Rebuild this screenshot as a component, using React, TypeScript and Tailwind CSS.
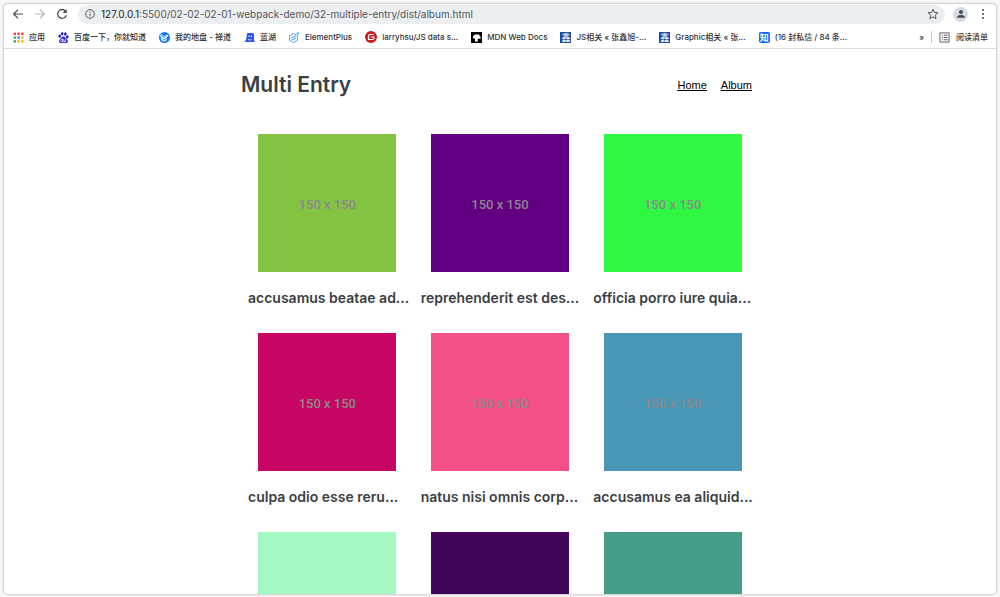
import type { ReactNode } from "react";
import { SiBaidu } from "react-icons/si";

const colors = ["#ea4335", "#ea4335", "#ea4335", "#34a853", "#4285f4", "#fbbc05", "#34a853", "#fbbc05", "#fbbc05"];

const AppsIcon = () => (
  <svg viewBox="0 0 11 11" className="size-[11px]" aria-hidden="true">
    {colors.map((c, i) => (
      <rect key={i} x={0.6 + (i % 3) * 3.8} y={0.6 + Math.floor(i / 3) * 3.8} width="2.4" height="2.4" fill={c} />
    ))}
  </svg>
);

const ZentaoIcon = () => (
  <svg viewBox="0 0 22 22" className="size-[11px]" aria-hidden="true">
    <circle cx="11" cy="11" r="11" fill="#1976e0" />
    <path d="M2 6c4-2 7 0 9 3 2-3 5-4 8-3 0 3-2 4-4 5 2 5 0 8-4 8-5 0-8-3-7-7C3 10 2 8 2 6Z" fill="#c5ebff" />
    <path d="M5 8c3 0 4 1 5 3M8 13c2 3 4 3 6 0" fill="none" stroke="#1976e0" strokeWidth="2" />
  </svg>
);

const LanhuIcon = () => (
  <svg viewBox="0 0 22 22" className="size-[11px]" aria-hidden="true">
    <path d="M8 2h9c2 0 3 1 3 3v12l2 3H1l3-4L6 4c0-1 1-2 2-2Z" fill="#2f54eb" />
    <path d="M9 7h2v3H9zM14 7h2v3h-2z" fill="#fff" />
    <path d="M8 14c2 3 5 3 7 0" fill="none" stroke="#fff" strokeWidth="1.5" />
  </svg>
);

const ElementIcon = () => (
  <svg viewBox="0 0 22 22" className="size-[11px]" aria-hidden="true">
    <path d="M9 3 17 7.5v9L9 21l-8-4.500v-9Z" fill="none" stroke="#5c9cf5" strokeWidth="2" />
    <path d="M5 10.500 14 7v2l-9 4zM5 15l9-3.500v2L5 17z" fill="#409eff" />
    <path d="M18 0v6M15 3h6" stroke="#409eff" strokeWidth="1.600" />
  </svg>
);

const GiteeIcon = () => (
  <svg viewBox="0 0 24 24" className="size-3" aria-hidden="true">
    <circle cx="12" cy="12" r="12" fill="#c71d23" />
    <path d="M18 7H10a3 3 0 0 0-3 3v7h8a3 3 0 0 0 3-3v-2h-7" fill="none" stroke="#fff" strokeWidth="2.400" />
  </svg>
);

const MdnIcon = () => (
  <svg viewBox="0 0 22 22" className="size-[11px]" aria-hidden="true">
    <path d="M0 0h22v22H0z" fill="#000" />
    <path d="M4 8 8 5h7l4 4v5l-4-1-2 2 1 4H8v-5l-4-2Z" fill="#fff" />
  </svg>
);

const XinIcon = () => (
  <span className="flex size-[11px] items-center justify-center bg-[#1c4ba0] text-[9px] leading-none text-white" aria-hidden="true">
    鑫
  </span>
);

const ZhihuIcon = () => (
  <span className="flex size-[11px] items-center justify-center rounded-[2px] bg-[#1268f2] text-[9px] font-bold leading-none text-white" aria-hidden="true">
    知
  </span>
);

const bookmarks: { label: string; icon: ReactNode }[] = [
  { label: "应用", icon: <AppsIcon /> },
  { label: "百度一下，你就知道", icon: <SiBaidu className="size-[11px] text-[#2319dc]" /> },
  { label: "我的地盘 - 禅道", icon: <ZentaoIcon /> },
  { label: "蓝湖", icon: <LanhuIcon /> },
  { label: "ElementPlus", icon: <ElementIcon /> },
  { label: "larryhsu/JS data s...", icon: <GiteeIcon /> },
  { label: "MDN Web Docs", icon: <MdnIcon /> },
  { label: "JS相关 « 张鑫旭-...", icon: <XinIcon /> },
  { label: "Graphic相关 « 张...", icon: <XinIcon /> },
  { label: "(16 封私信 / 84 条...", icon: <ZhihuIcon /> },
];

const photos = [
  { title: "accusamus beatae ad...", color: "bg-[#84c341]" },
  { title: "reprehenderit est des...", color: "bg-[#620081]" },
  { title: "officia porro iure quia...", color: "bg-[#2ff842]" },
  { title: "culpa odio esse reru...", color: "bg-[#c60662]" },
  { title: "natus nisi omnis corp...", color: "bg-[#f35085]" },
  { title: "accusamus ea aliquid...", color: "bg-[#4897b6]" },
  { title: "", color: "bg-[#a4f9c2]" },
  { title: "", color: "bg-[#420459]" },
  { title: "", color: "bg-[#449d86]" },
];

function Toolbar() {
  return (
    <div className="flex h-5 shrink-0 items-center px-2 text-[#50545a]">
      <button aria-label="Back" className="mr-2.5">
        <svg viewBox="0 0 12 12" className="size-3" fill="none" stroke="#45494d" strokeWidth="1.200">
          <path d="M11 6H2M6 1.700 1.700 6 6 10.300" />
        </svg>
      </button>
      <button aria-label="Forward" className="mr-2.5">
        <svg viewBox="0 0 12 12" className="size-3" fill="none" stroke="#b4b6b9" strokeWidth="1.200">
          <path d="M1 6h9M6 1.700 10.300 6 6 10.300" />
        </svg>
      </button>
      <button aria-label="Reload" className="mr-2.5">
        <svg viewBox="0 0 12 12" className="size-3" fill="none" stroke="#45494d" strokeWidth="1.300">
          <path d="M9.800 3.500A4.400 4.400 0 1 0 10.300 7.200" />
          <path d="M10.700 1v4h-4Z" fill="#45494d" stroke="none" />
        </svg>
      </button>
      <div className="flex h-[19px] grow items-center rounded-full bg-[#eceff1] pl-[7px] pr-1.5">
        <svg viewBox="0 0 12 12" className="mr-1.5 size-2.5" fill="none" stroke="#55595e" strokeWidth="1.200" aria-hidden="true">
          <circle cx="6" cy="6" r="5.200" />
          <path d="M6 5.300V9M6 2.900v1.300" />
        </svg>
        <div className="grow whitespace-nowrap font-[Inter,'Liberation_Sans',sans-serif] text-[10px] leading-4">
          <span className="text-[#202124]">127.0.0.1</span>:5500/02-02-02-01-webpack-demo/32-multiple-entry/dist/album.html
        </div>
        <button aria-label="Bookmark this page">
          <svg viewBox="0 0 24 24" className="size-3" fill="none" stroke="#50545a" strokeWidth="2">
            <path d="m12 2.500 2.900 6.400 6.900.7-5.200 4.700 1.500 6.900L12 17.700l-6.100 3.500 1.500-6.900-5.200-4.700 6.900-.7Z" />
          </svg>
        </button>
      </div>
      <button aria-label="Profile" className="ml-2 flex size-[15px] items-center justify-center rounded-full bg-[#d8dce3]">
        <svg viewBox="0 0 10 10" className="size-2.5" fill="#434b5b">
          <circle cx="5" cy="3" r="2.100" />
          <path d="M1 8.700C1 6.500 3.500 6 5 6s4 .5 4 2.700Z" />
        </svg>
      </button>
      <button aria-label="Menu" className="ml-2.5">
        <svg viewBox="0 0 10 12" className="h-3 w-2.5" fill="#50545a">
          <circle cx="5" cy="2" r="1.100" />
          <circle cx="5" cy="6" r="1.100" />
          <circle cx="5" cy="10" r="1.100" />
        </svg>
      </button>
    </div>
  );
}

function Bookmarks() {
  return (
    <div className="flex h-[25px] shrink-0 items-center whitespace-nowrap border-b border-[#dcdddf] pl-[9px] pr-2 pt-0.5 font-[Inter,'Noto_Sans_CJK_SC',sans-serif] text-[8px] font-medium leading-3 text-[#303236]">
      <nav aria-label="Bookmarks" className="flex items-center gap-[13px]">
        {bookmarks.map((b) => (
          <a key={b.label} href="#" className="flex items-center gap-[5px]">
            {b.icon}
            <span>{b.label}</span>
          </a>
        ))}
      </nav>
      <button aria-label="More bookmarks" className="ml-auto">»</button>
      <span className="ml-[7px] h-3 w-px bg-[#c9cbce]" />
      <button className="ml-[7px] flex items-center gap-1.5">
        <svg viewBox="0 0 12 12" className="size-[11px]" fill="none" stroke="#50545a" aria-hidden="true">
          <path d="M1 1h10v10H1zM3 3.500h1.200M5.200 3.500H9.500M3 6h1.200M5.200 6H9.500M3 8.500h1.200M5.200 8.500H9.500" />
        </svg>
        阅读清单
      </button>
    </div>
  );
}

export default function App() {
  return (
    <div className="flex h-screen flex-col bg-[#f7f7f7] px-1 pb-[3px] pt-1 font-[Roboto,'Noto_Sans_CJK_SC',sans-serif]">
      <div className="flex min-h-0 grow flex-col overflow-hidden rounded-[4px] bg-white shadow-[0_0_2px_1px_rgba(0,0,0,0.18)]">
        <Toolbar />
        <Bookmarks />
        <main className="mx-auto min-h-0 w-[518px] max-w-full flex-1 overflow-hidden">
          <header className="flex items-center justify-between pb-[33px] pt-5">
            <h1 className="font-[Inter,sans-serif] text-[21px] font-semibold leading-8 text-[#3b3f44]">Multi Entry</h1>
            <nav aria-label="Main" className="flex gap-3.5 pr-[7px] font-['Liberation_Sans',Arial,sans-serif] text-[11px] leading-4 text-black underline">
              <a href="#">Home</a>
              <a href="#">Album</a>
            </nav>
          </header>
          <div className="grid grid-cols-3">
            {photos.map((p) => (
              <figure key={p.color} className="flex flex-col items-center">
                <div className={`flex aspect-square w-4/5 items-center justify-center text-[13px] font-medium leading-4 text-[#8a8a8a] ${p.color}`}>
                  {p.title && <span className="pt-1">150 x 150</span>}
                </div>
                <figcaption className="h-[61px] w-full whitespace-nowrap px-[7px] pt-4 font-[Inter,sans-serif] text-[14px] font-semibold leading-5 text-[#3b3f44]">
                  {p.title}
                </figcaption>
              </figure>
            ))}
          </div>
        </main>
      </div>
    </div>
  );
}
